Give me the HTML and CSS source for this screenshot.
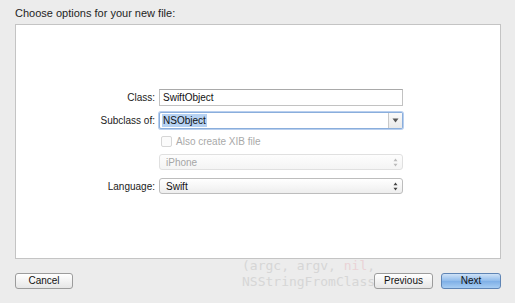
FILE: index.html
```html
<!DOCTYPE html>
<html lang="en">
<head>
    <meta charset="UTF-8">
    <title>Choose options for your new file</title>
    <link rel="stylesheet" href="styles.css">
</head>
<body>
    <div class="sheet">
        <!-- window underneath, seen through the sheet -->
        <div class="ghost-code">
            <div>(argc, argv, <span class="nil">nil</span>,</div>
            <div>NSStringFromClass</div>
        </div>

        <div class="title">Choose options for your new file:</div>

        <div class="panel">
            <div class="row row-class">
                <label class="label">Class:</label>
                <div class="field">SwiftObject</div>
            </div>
            <div class="row row-subclass">
                <label class="label">Subclass of:</label>
                <div class="field combo">
                    <span class="combo-text"><span class="selected">NSObject</span></span>
                    <span class="combo-btn">
                        <svg width="7" height="5" viewBox="0 0 7 5"><path d="M0.5 0.5 L6.5 0.5 L3.5 4.5 Z" fill="#555"/></svg>
                    </span>
                </div>
            </div>
            <div class="row row-check">
                <span class="label"></span>
                <div class="check-wrap">
                    <span class="checkbox"></span>
                    <span class="check-text">Also create XIB file</span>
                </div>
            </div>
            <div class="row row-device">
                <span class="label"></span>
                <div class="popup disabled">
                    <span>iPhone</span>
                    <svg width="5" height="9" viewBox="0 0 5 9"><path d="M2.5 0.5 L4.5 3.3 L0.5 3.3 Z M2.5 8.5 L4.5 5.7 L0.5 5.7 Z" fill="#bbb"/></svg>
                </div>
            </div>
            <div class="row row-lang">
                <label class="label">Language:</label>
                <div class="popup">
                    <span>Swift</span>
                    <svg width="5" height="9" viewBox="0 0 5 9"><path d="M2.5 0.5 L4.5 3.3 L0.5 3.3 Z M2.5 8.5 L4.5 5.7 L0.5 5.7 Z" fill="#444"/></svg>
                </div>
            </div>
        </div>

        <div class="buttons">
            <button class="btn">Cancel</button>
            <div class="btn-group">
                <button class="btn btn-prev">Previous</button>
                <button class="btn btn-next">Next</button>
            </div>
        </div>
    </div>
</body>
</html>
```

FILE: styles.css
```css
body {
    margin: 0;
    font-family: "Lucida Grande", "Liberation Sans", Arial, sans-serif;
    font-size: 10px;
    color: #222;
}
.sheet {
    position: relative;
    width: 515px;
    height: 303px;
    background-color: #ececec;
    overflow: hidden;
}
.ghost-code {
    position: absolute;
    left: 242px;
    top: 258px;
    font-family: "DejaVu Sans Mono", monospace;
    font-size: 13px;
    line-height: 16px;
    color: #d6d6d6;
}
.ghost-code .nil {
    color: #ead3d6;
}
.title {
    position: relative;
    height: 24px;
    padding-left: 15px;
    line-height: 27px;
    font-size: 11px;
    color: #1e1e1e;
}
.panel {
    position: relative;
    margin-left: 15px;
    width: 486px;
    height: 235px;
    box-sizing: border-box;
    border: 1px solid #c4c4c4;
    background-color: #fff;
    padding-top: 64px;
}
.row {
    display: flex;
    align-items: center;
    height: 17px;
}
.row-subclass {
    margin-top: 6px;
}
.row-check {
    margin-top: 4px;
    height: 16px;
}
.row-device {
    margin-top: 5px;
    height: 16px;
}
.row-lang {
    margin-top: 8px;
    height: 16px;
}
.label {
    width: 139px;
    margin-right: 4px;
    text-align: right;
    color: #222;
}
.field {
    width: 244px;
    height: 17px;
    box-sizing: border-box;
    border: 1px solid #c2c2c2;
    border-top-color: #a9a9a9;
    padding: 0 3px;
    line-height: 15px;
    color: #111;
    background: #fff;
}
.combo {
    display: flex;
    padding: 0;
    border: 1px solid #8aaedc;
    box-shadow: 0 0 0 1px #b9cfee;
    border-radius: 2px;
}
.combo-text {
    flex: 1;
    padding-left: 2px;
}
.selected {
    background-color: #b6d2f3;
    padding: 1px 1px;
}
.combo-btn {
    width: 13px;
    border-left: 1px solid #c9c9c9;
    display: flex;
    align-items: center;
    justify-content: center;
    background: linear-gradient(#fafafa, #e9e9e9);
}
.check-wrap {
    display: flex;
    align-items: center;
}
.checkbox {
    width: 9px;
    height: 9px;
    border: 1px solid #d6d6d6;
    border-radius: 2px;
    background: #fbfbfb;
    margin-left: 2px;
    margin-right: 4px;
}
.check-text {
    color: #a9a9a9;
}
.popup {
    display: flex;
    align-items: center;
    justify-content: space-between;
    width: 244px;
    height: 16px;
    box-sizing: border-box;
    padding: 0 4px 0 6px;
    border: 1px solid #bdbdbd;
    border-radius: 3px;
    background: linear-gradient(#ffffff, #eeeeee);
    color: #111;
}
.popup.disabled {
    border-color: #e0e0e0;
    color: #a6a6a6;
    background: linear-gradient(#fdfdfd, #f4f4f4);
}
.buttons {
    position: relative;
    display: flex;
    justify-content: space-between;
    margin: 14px 14px 0 15px;
}
.btn-group {
    display: flex;
    gap: 8px;
}
.btn {
    height: 16px;
    padding: 0;
    font-family: inherit;
    font-size: 10px;
    line-height: 14px;
    color: #111;
    border: 1px solid #9c9c9c;
    border-radius: 3px;
    background: linear-gradient(#ffffff, #e6e6e6);
    width: 58px;
}
.btn-prev {
    width: 59px;
}
.btn-next {
    width: 60px;
    border-color: #5f85b5;
    background: linear-gradient(#cfe2f7, #8fbbeb 50%, #7eafe6 51%, #a7cdf3);
}
```
